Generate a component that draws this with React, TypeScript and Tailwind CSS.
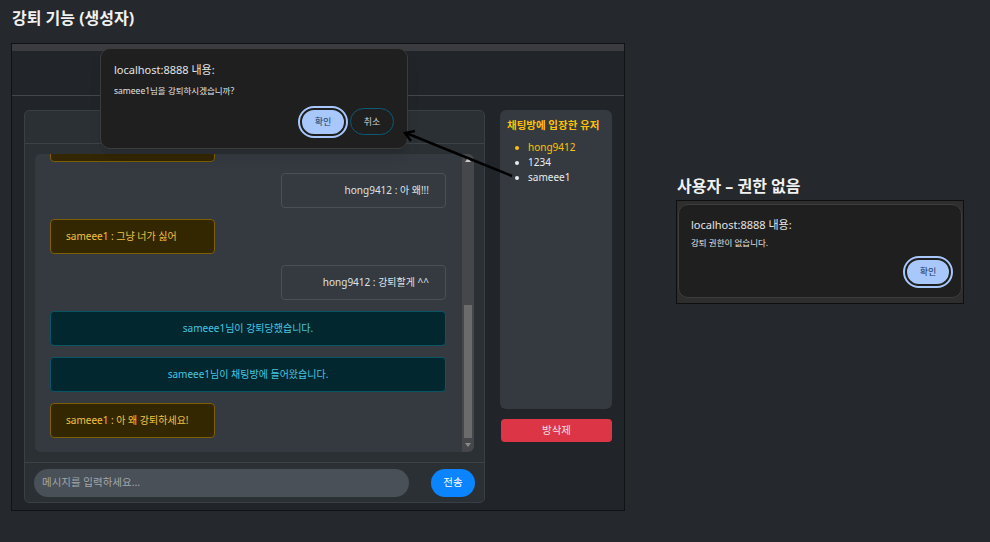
import type React from 'react';

const FONT = { fontFamily: '"Noto Sans", "Noto Sans CJK KR", sans-serif' };

type Msg =
  | { kind: 'me'; text: string }
  | { kind: 'other'; text: string }
  | { kind: 'system'; text: string };

// first bubble is scrolled almost out of view, only its bottom edge shows
const messages: Msg[] = [
  { kind: 'me', text: '' },
  { kind: 'other', text: 'hong9412 : 아 왜!!!' },
  { kind: 'me', text: 'sameee1 : 그냥 너가 싫어' },
  { kind: 'other', text: 'hong9412 : 강퇴할게 ^^' },
  { kind: 'system', text: 'sameee1님이 강퇴당했습니다.' },
  { kind: 'system', text: 'sameee1님이 채팅방에 들어왔습니다.' },
  { kind: 'me', text: 'sameee1 : 아 왜 강퇴하세요!' },
];

const Bubble: React.FC<{ msg: Msg }> = ({ msg }) => {
  if (msg.kind === 'system') {
    return (
      <div className="mb-[11px] flex h-[35px] w-full shrink-0 items-center justify-center rounded-[4px] border border-[#0a5565] bg-[#03272f] text-[10px] text-[#46c5e0]">
        {msg.text}
      </div>
    );
  }
  if (msg.kind === 'other') {
    return (
      <div className="mb-[11px] flex w-full shrink-0 justify-end">
        <div className="flex h-[35px] w-[165px] items-center justify-end rounded-[4px] border border-[#4a5057] pr-[16px] text-[10px] text-[#dee2e6]">
          {msg.text}
        </div>
      </div>
    );
  }
  return (
    <div className="mb-[11px] flex w-full shrink-0">
      <div className="flex h-[35px] w-[165px] items-center rounded-[4px] border border-[#7d5e06] bg-[#332701] pl-[15px] text-[10px] text-[#f1c244]">
        {msg.text}
      </div>
    </div>
  );
};

const ConfirmButton: React.FC<{ label: string }> = ({ label }) => (
  <button
    type="button"
    className="flex h-[28px] w-[46px] items-center justify-center rounded-full border-2 border-[#1f1f1f] bg-[#a8c7fa] text-[9px] text-[#203b66] outline-2 outline-[#a8c7fa]"
  >
    {label}
  </button>
);

export default function App() {
  return (
    <div
      className="relative flex h-[542px] w-[990px] overflow-hidden bg-[#25282c] text-white"
      style={FONT}
    >
      {/* Left: creator view */}
      <div className="flex flex-col pl-[11px]">
        <div className="h-[43px] pl-px pt-[7px] text-[16px] font-bold leading-[22px] text-[#f1f1f1]">
          강퇴 기능 (생성자)
        </div>
        <div className="flex h-[468px] w-[614px] flex-col border border-[#101214] bg-[#212529]">
          <div className="h-[7px] bg-[#3a3c3f]" />
          <div className="h-[45px] border-b border-[#43474c]" />
          <div className="flex gap-[15px] pl-[12px] pt-[14px]">
            {/* Chat card */}
            <div className="flex h-[393px] w-[461px] flex-col rounded-[5px] border border-[#3a3f45] bg-[#2b3035]">
              <div className="h-[33px] border-b border-[#3d4248]" />
              <div className="p-[10px]">
                <div className="flex h-[298px] overflow-hidden rounded-[6px] bg-[#343a40]">
                  <div className="flex flex-1 flex-col overflow-hidden pl-[15px] pr-[16px]">
                    <div className="mt-[-27px]">
                      {messages.map((m, i) => (
                        <Bubble key={i} msg={m} />
                      ))}
                    </div>
                  </div>
                  {/* scrollbar */}
                  <div className="flex w-[12px] flex-col items-center bg-[#45474a]">
                    <div className="mt-[4px] h-0 w-0 border-x-[3px] border-b-[4px] border-x-transparent border-b-[#c8c8c8]" />
                    <div className="mt-[143px] h-[133px] w-[8px] bg-[#6b6b6b]" />
                    <div className="mt-[5px] h-0 w-0 border-x-[3px] border-t-[4px] border-x-transparent border-t-[#8a8a8a]" />
                  </div>
                </div>
              </div>
              <div className="flex h-[40px] items-center border-t border-[#3d4248] px-[9px]">
                <div className="flex h-[28px] w-[375px] items-center rounded-full bg-[#495057] pl-[8px] text-[10.5px] text-[#a3a7ac]">
                  메시지를 입력하세요...
                </div>
                <button
                  type="button"
                  className="ml-auto flex h-[28px] w-[44px] items-center justify-center rounded-full bg-[#0a84ff] text-[10.5px] text-white"
                >
                  전송
                </button>
              </div>
            </div>

            {/* User list */}
            <div className="flex w-[112px] flex-col">
              <div className="h-[299px] rounded-[6px] bg-[#343a40] px-[7px] pt-[8px]">
                <div className="text-[10.5px] font-bold leading-[14px] text-[#ffc107]">
                  채팅방에 입장한 유저
                </div>
                <ul className="mt-[8px] pl-[8px] text-[10px] leading-[15px]">
                  <li className="flex items-center gap-[9px] text-[#ffc107]">
                    <span className="h-[4px] w-[4px] rounded-full bg-[#ffc107]" />
                    hong9412
                  </li>
                  <li className="flex items-center gap-[9px] text-[#e9ecef]">
                    <span className="h-[4px] w-[4px] rounded-full bg-[#e9ecef]" />
                    1234
                  </li>
                  <li className="flex items-center gap-[9px] text-[#e9ecef]">
                    <span className="h-[4px] w-[4px] rounded-full bg-[#e9ecef]" />
                    sameee1
                  </li>
                </ul>
              </div>
              <button
                type="button"
                className="ml-px mt-[10px] flex h-[23px] w-[111px] items-center justify-center rounded-[4px] bg-[#dc3545] text-[10.5px] text-[#f3e1e3]"
              >
                방삭제
              </button>
            </div>
          </div>
        </div>
      </div>

      {/* Right: user view */}
      <div className="ml-[51px] flex flex-col pt-[175px]">
        <div className="h-[25px] pl-px text-[16px] font-bold leading-[22px] text-[#f1f1f1]">
          사용자 – 권한 없음
        </div>
        <div className="h-[104px] w-[288px] border border-[#0f0f0f] bg-[#2e2e2e] px-px pt-[3px]">
          <div className="flex h-[94px] flex-col rounded-[10px] border border-[#3c3c3c] bg-[#1f1f1f] pl-[12px] pr-[10px] pt-[12px]">
            <div className="text-[11px] leading-[16px] text-[#e3e3e3]">localhost:8888 내용:</div>
            <div className="mt-[4px] text-[8.5px] leading-[12px] text-[#e3e3e3]">강퇴 권한이 없습니다.</div>
            <div className="mt-[9px] flex justify-end">
              <ConfirmButton label="확인" />
            </div>
          </div>
        </div>
      </div>

      {/* Confirm dialog over the creator view */}
      <div className="absolute left-[100px] top-[48px] flex h-[101px] w-[308px] flex-col rounded-[10px] border border-[#3c3c3c] bg-[#1f1f1f] px-[13px] pt-[13px] shadow-lg">
        <div className="text-[11px] leading-[16px] text-[#e3e3e3]">localhost:8888 내용:</div>
        <div className="mt-[7px] text-[8.5px] leading-[12px] text-[#e3e3e3]">sameee1님을 강퇴하시겠습니까?</div>
        <div className="mt-[11px] flex justify-end gap-[4px]">
          <ConfirmButton label="확인" />
          <button
            type="button"
            className="flex h-[27px] w-[44px] items-center justify-center rounded-full border border-[#0b5a78] text-[9px] text-[#d0d3d6]"
          >
            취소
          </button>
        </div>
      </div>

      {/* Annotation arrow */}
      <svg
        className="pointer-events-none absolute left-0 top-0"
        width="990"
        height="542"
        viewBox="0 0 990 542"
      >
        <line x1="512" y1="176" x2="406" y2="133" stroke="#000" strokeWidth="2.5" />
        <polyline
          points="415,131 405,133 411,141"
          fill="none"
          stroke="#000"
          strokeWidth="2.5"
          strokeLinejoin="miter"
        />
      </svg>
    </div>
  );
}
